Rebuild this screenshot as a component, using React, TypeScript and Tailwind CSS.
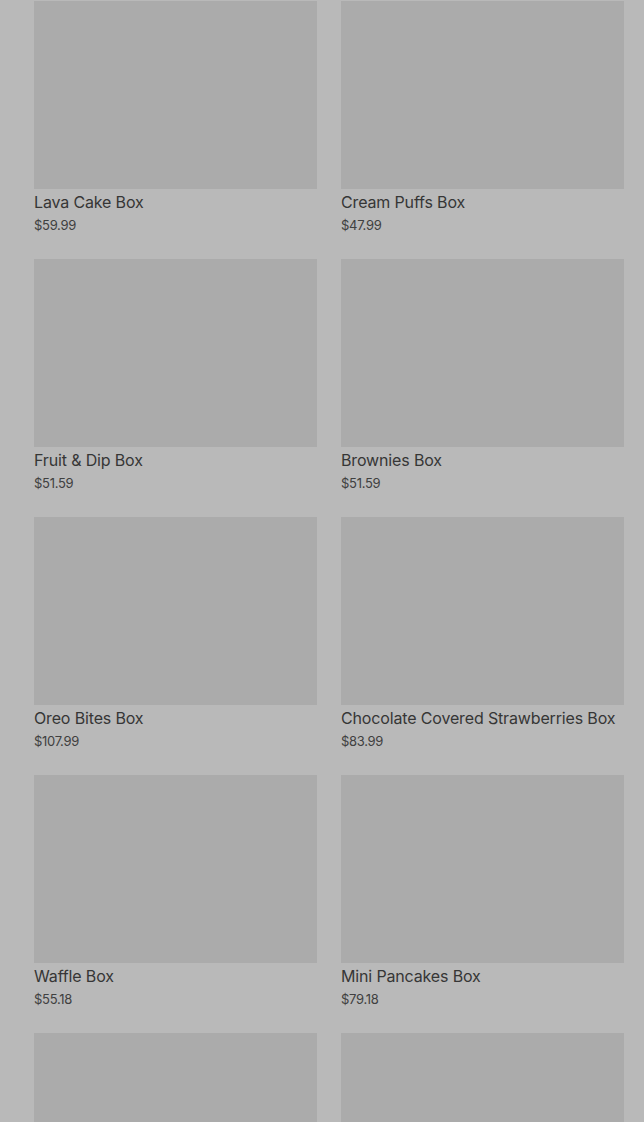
const products = [
  { name: "Lava Cake Box", price: "$59.99" },
  { name: "Cream Puffs Box", price: "$47.99" },
  { name: "Fruit & Dip Box", price: "$51.59" },
  { name: "Brownies Box", price: "$51.59" },
  { name: "Oreo Bites Box", price: "$107.99" },
  { name: "Chocolate Covered Strawberries Box", price: "$83.99" },
  { name: "Waffle Box", price: "$55.18" },
  { name: "Mini Pancakes Box", price: "$79.18" },
]

export default function App() {
  return (
    <div className="h-[1122px] overflow-hidden bg-[#b9b9b9] pl-[34px] pr-[20px] pt-px font-['Inter',sans-serif]">
      <div className="grid grid-cols-2 gap-x-6 gap-y-6">
        {products.map((p) => (
          <div key={p.name} className="flex flex-col">
            <div className="h-[188px] bg-[#ababab]" />
            <div className="mt-px text-[16px] leading-6 font-normal tracking-[-0.15px] text-[#363636] whitespace-nowrap">{p.name}</div>
            <div className="mt-px text-[13px] leading-5 text-[#404040] tracking-[-0.3px]">{p.price}</div>
          </div>
        ))}
        {/* next row, only the images are in view */}
        <div className="h-[188px] bg-[#ababab]" />
        <div className="h-[188px] bg-[#ababab]" />
      </div>
    </div>
  )
}
